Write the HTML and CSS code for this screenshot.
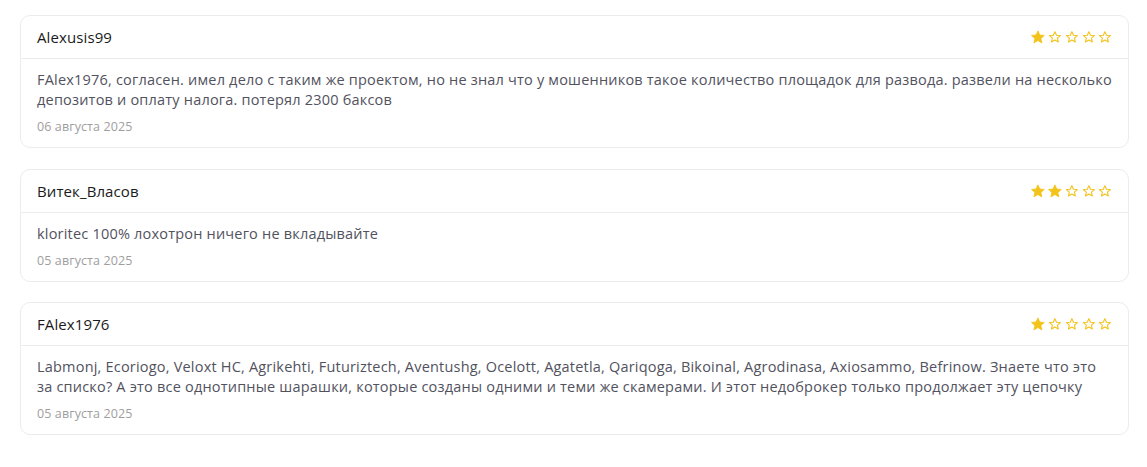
FILE: index.html
```html
<!DOCTYPE html>
<html lang="ru">
<head>
<meta charset="utf-8">
<title>Отзывы</title>
<link rel="stylesheet" href="styles.css">
</head>
<body>
<svg width="0" height="0" class="defs">
  <defs>
    <symbol id="star-full" viewBox="1.5 2 21 20"><path d="M12 2.8l2.85 6.35 6.9.65-5.2 4.6 1.55 6.8L12 17.6l-6.1 3.6 1.55-6.8-5.2-4.6 6.9-.65z" fill="#f2c31a" stroke="#f2c31a" stroke-width="1.2" stroke-linejoin="round"/></symbol>
    <symbol id="star-empty" viewBox="1.5 2 21 20"><path d="M12 4l2.4 5.4 5.9.55-4.45 3.95 1.35 5.8L12 16.7l-5.2 3 1.35-5.8L3.7 9.95l5.9-.55z" fill="none" stroke="#f2c31a" stroke-width="1.7" stroke-linejoin="round"/></symbol>
  </defs>
</svg>
<main class="reviews">
  <article class="review">
    <header class="review-head">
      <span class="author">Alexusis99</span>
      <span class="stars">
        <svg class="star"><use href="#star-full"/></svg>
        <svg class="star"><use href="#star-empty"/></svg>
        <svg class="star"><use href="#star-empty"/></svg>
        <svg class="star"><use href="#star-empty"/></svg>
        <svg class="star"><use href="#star-empty"/></svg>
      </span>
    </header>
    <div class="review-body">
      <p class="text">FAlex1976, согласен. имел дело с таким же проектом, но не знал что у мошенников такое количество площадок для развода. развели на несколько депозитов и оплату налога. потерял 2300 баксов</p>
      <p class="date">06 августа 2025</p>
    </div>
  </article>
  <article class="review">
    <header class="review-head">
      <span class="author">Витек_Власов</span>
      <span class="stars">
        <svg class="star"><use href="#star-full"/></svg>
        <svg class="star"><use href="#star-full"/></svg>
        <svg class="star"><use href="#star-empty"/></svg>
        <svg class="star"><use href="#star-empty"/></svg>
        <svg class="star"><use href="#star-empty"/></svg>
      </span>
    </header>
    <div class="review-body">
      <p class="text">kloritec 100% лохотрон ничего не вкладывайте</p>
      <p class="date">05 августа 2025</p>
    </div>
  </article>
  <article class="review">
    <header class="review-head">
      <span class="author">FAlex1976</span>
      <span class="stars">
        <svg class="star"><use href="#star-full"/></svg>
        <svg class="star"><use href="#star-empty"/></svg>
        <svg class="star"><use href="#star-empty"/></svg>
        <svg class="star"><use href="#star-empty"/></svg>
        <svg class="star"><use href="#star-empty"/></svg>
      </span>
    </header>
    <div class="review-body">
      <p class="text">Labmonj, Ecoriogo, Veloxt HC, Agrikehti, Futuriztech, Aventushg, Ocelott, Agatetla, Qariqoga, Bikoinal, Agrodinasa, Axiosammo, Befrinow. Знаете что это за списко? А это все однотипные шарашки, которые созданы одними и теми же скамерами. И этот недоброкер только продолжает эту цепочку</p>
      <p class="date">05 августа 2025</p>
    </div>
  </article>
</main>
</body>
</html>
```
FILE: styles.css
```css
* { box-sizing: border-box; }
html, body { margin: 0; padding: 0; background: #fff; }
body {
  font-family: "Open Sans", "Liberation Sans", sans-serif;
  color: #222;
}
.defs { position: absolute; width: 0; height: 0; overflow: hidden; }
.reviews {
  display: flex;
  flex-direction: column;
  gap: 20.5px;
  padding: 15px 18px 0 20px;
}
.review {
  border: 1px solid #ececec;
  border-radius: 10px;
  background: #fff;
}
.review-head {
  display: flex;
  justify-content: space-between;
  align-items: center;
  padding: 11px 16px 11px 16px;
  border-bottom: 1px solid #ececec;
}
.author {
  font-size: 15px;
  line-height: 20px;
  font-weight: 500;
  letter-spacing: 0.1px;
  color: #1a1a1a;
}
.stars { display: flex; gap: 2.9px; }
.star { width: 13.8px; height: 13.8px; display: block; }
.review-body { padding: 11px 16px 11px 16px; }
.text {
  margin: 0;
  font-size: 14.5px;
  line-height: 20px;
  letter-spacing: 0.2px;
  color: #52525e;
}
.date {
  margin: 8px 0 0;
  font-size: 12.5px;
  line-height: 18px;
  letter-spacing: 0.1px;
  color: #9e9e9e;
}
```
